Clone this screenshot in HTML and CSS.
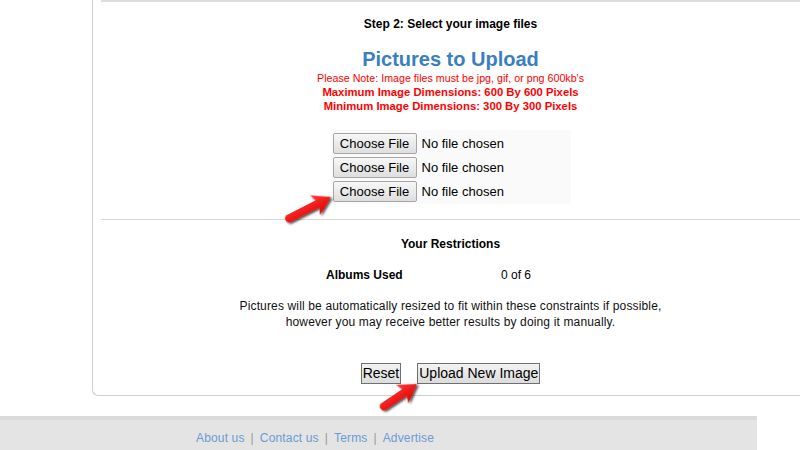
FILE: index.html
```html
<!DOCTYPE html>
<html lang="en">
<head>
  <meta charset="UTF-8">
  <meta name="viewport" content="width=device-width, initial-scale=1.0">
  <title>Upload Pictures</title>
  <link rel="stylesheet" href="styles.css">
</head>
<body>
  <div class="panel">
    <div class="step">
      <p class="step-title">Step 2: Select your image files</p>
      <h1 class="upload-title">Pictures to Upload</h1>
      <p class="note">Please Note: Image files must be jpg, gif, or png 600kb's</p>
      <p class="note strong">Maximum Image Dimensions: 600 By 600 Pixels</p>
      <p class="note strong">Minimum Image Dimensions: 300 By 300 Pixels</p>

      <div class="files">
        <div class="file-row">
          <span class="file-btn">Choose File</span>
          <span class="file-name">No file chosen</span>
        </div>
        <div class="file-row">
          <span class="file-btn">Choose File</span>
          <span class="file-name">No file chosen</span>
        </div>
        <div class="file-row">
          <span class="file-btn">Choose File</span>
          <span class="file-name">No file chosen</span>
        </div>
      </div>
    </div>

    <div class="restrictions">
      <p class="restrictions-title">Your Restrictions</p>
      <div class="usage">
        <span class="usage-label">Albums Used</span>
        <span class="usage-value">0 of 6</span>
      </div>
      <p class="hint">Pictures will be automatically resized to fit within these constraints if possible,<br>however you may receive better results by doing it manually.</p>
      <div class="actions">
        <button class="btn" type="reset">Reset</button>
        <button class="btn" type="submit">Upload New Image</button>
      </div>
    </div>
  </div>

  <div class="footer">
    <a href="#">About us</a><span class="sep">|</span><a href="#">Contact us</a><span class="sep">|</span><a href="#">Terms</a><span class="sep">|</span><a href="#">Advertise</a>
  </div>

  <!-- red pointer arrows drawn over the form -->
  <svg class="arrows" viewBox="0 0 800 450" width="800" height="450">
    <defs>
      <filter id="shadow" x="-50%" y="-50%" width="200%" height="200%">
        <feDropShadow dx="1" dy="2" stdDeviation="1.3" flood-color="#000" flood-opacity="0.7"></feDropShadow>
      </filter>
      <linearGradient id="red" x1="0" y1="0" x2="0" y2="1">
        <stop offset="0" stop-color="#ff3a3a"></stop>
        <stop offset="1" stop-color="#e00000"></stop>
      </linearGradient>
    </defs>
    <path transform="translate(331,197) rotate(-27)" filter="url(#shadow)" fill="url(#red)"
      d="M0 0 L-18 -11 L-15 -4 L-47 -4 Q-51 -4 -51 0 Q-51 4 -47 4 L-15 4 L-18 11 Z"></path>
    <path transform="translate(417,384) rotate(-34)" filter="url(#shadow)" fill="url(#red)"
      d="M0 0 L-18 -11 L-15 -4 L-40 -4 Q-44 -4 -44 0 Q-44 4 -40 4 L-15 4 L-18 11 Z"></path>
  </svg>
</body>
</html>
```

FILE: styles.css
```css
body {
  margin: 0;
  background: white;
  font-family: "Liberation Sans", Arial, sans-serif;
  color: #000;
  overflow: hidden;
  position: relative;
  width: 800px;
  height: 450px;
}

p {
  margin: 0;
}

.panel {
  margin-left: 92px;
  width: 699px;
  padding: 0 0 11px 8px;
  border-left: 1px solid #cfcfcf;
  border-bottom: 1px solid #cfcfcf;
  border-bottom-left-radius: 6px;
}

.step {
  border-top: 2px solid #dedede;
  padding: 14px 0 15px;
  text-align: center;
}

.step-title {
  font-size: 12px;
  font-weight: bold;
  line-height: 16px;
}

.upload-title {
  margin: 15px 0 0;
  font-size: 20px;
  line-height: 24px;
  color: #3a7fc0;
}

.note {
  font-size: 10.7px;
  line-height: 14px;
  color: #f00;
}

.note.strong {
  font-size: 11.3px;
  font-weight: bold;
}

.files {
  width: 238px;
  margin: 17px auto 0;
  padding: 3px 0 2px 2px;
  background: #fafafa;
  display: flex;
  flex-direction: column;
  gap: 3px;
}

.file-row {
  display: flex;
  align-items: center;
  gap: 5px;
  font-size: 13px;
}

.file-btn {
  box-sizing: border-box;
  width: 84px;
  height: 21px;
  line-height: 19px;
  text-align: center;
  border: 1px solid #a6a6a6;
  border-radius: 2px;
  background: linear-gradient(#f7f7f7, #dedede);
  color: #000;
}

.file-name {
  color: #000;
}

.restrictions {
  border-top: 1px solid #d8d8d8;
  padding-top: 16px;
  text-align: center;
}

.restrictions-title {
  font-size: 12px;
  font-weight: bold;
  line-height: 16px;
}

.usage {
  display: flex;
  margin-top: 15px;
  padding-left: 225px;
  font-size: 12px;
  line-height: 16px;
  text-align: left;
}

.usage-label {
  width: 175px;
  font-weight: bold;
}

.hint {
  margin-top: 15px;
  font-size: 12px;
  letter-spacing: 0.15px;
  line-height: 16px;
  color: #111;
}

.actions {
  margin-top: 33px;
  display: flex;
  justify-content: center;
  gap: 16px;
}

.btn {
  height: 21px;
  padding: 0 1px;
  font-family: "Liberation Sans", Arial, sans-serif;
  font-size: 14px;
  line-height: 19px;
  color: #000;
  border: 1px solid #6f6f6f;
  border-radius: 0;
  background: linear-gradient(#f3f3f3, #dcdcdc);
}

.footer {
  margin-top: 20px;
  width: 757px;
  height: 34px;
  box-sizing: border-box;
  border-top: 4px solid #dadada;
  background: #e4e4e4;
  padding: 11px 0 0 196px;
  font-size: 12px;
  letter-spacing: 0.15px;
  line-height: 14px;
}

.footer a {
  color: #6b9bd2;
  text-decoration: none;
}

.footer .sep {
  margin: 0 6px;
  color: #999;
}

.arrows {
  position: absolute;
  top: 0;
  left: 0;
  pointer-events: none;
}
```
